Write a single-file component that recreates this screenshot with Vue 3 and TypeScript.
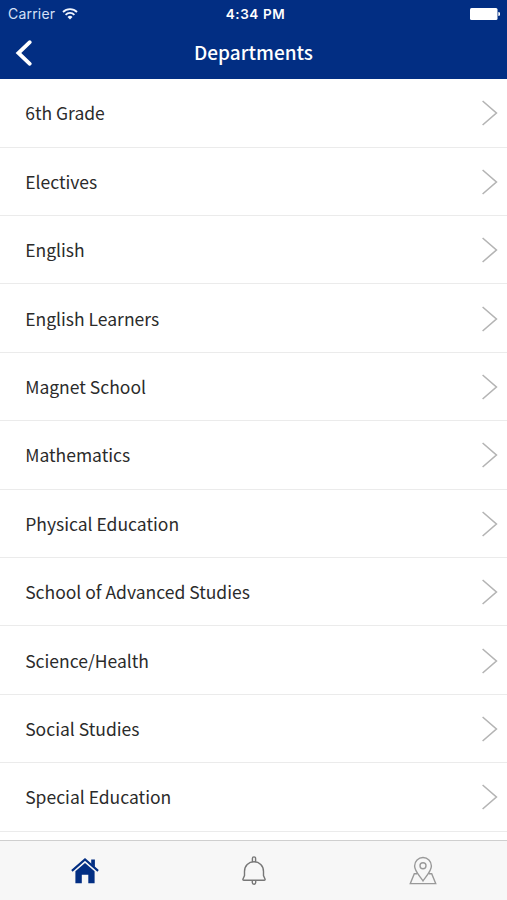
<script setup lang="ts">
const departments: string[] = [
  '6th Grade',
  'Electives',
  'English',
  'English Learners',
  'Magnet School',
  'Mathematics',
  'Physical Education',
  'School of Advanced Studies',
  'Science/Health',
  'Social Studies',
  'Special Education',
]
</script>

<template>
  <div class="screen">
    <header class="header">
      <div class="status">
        <div class="carrier">
          <span>Carrier</span>
          <svg class="wifi" width="16" height="12" viewBox="0 0 16 12">
            <path d="M1 4a9.8 9.8 0 0 1 14 0M3.6 6.8a6.2 6.2 0 0 1 8.8 0" />
            <path class="dot" d="M5.5 8.9a3.6 3.6 0 0 1 5 0L8 11.4z" />
          </svg>
        </div>
        <span class="time">4:34 PM</span>
        <div class="power">
          <svg width="30" height="12" viewBox="0 0 30 12">
            <rect x="0" y="0" width="27.5" height="12" rx="1.5" />
            <path d="M28.3 4a2 2 0 0 1 0 4z" />
          </svg>
        </div>
      </div>
      <div class="navbar">
        <button class="back" aria-label="Back">
          <svg width="18" height="28" viewBox="0 0 18 28">
            <path d="M14.8 3.2L3.4 14L14.8 24.8" />
          </svg>
        </button>
        <h1>Departments</h1>
        <span></span>
      </div>
    </header>

    <main class="list">
      <div v-for="name in departments" :key="name" class="row">
        <span class="label">{{ name }}</span>
        <svg class="chevron" width="17" height="26" viewBox="0 0 17 26">
          <path d="M1.6 1L15.4 13L1.6 25" />
        </svg>
      </div>
    </main>

    <nav class="tabs">
      <button class="tab home" aria-label="Home">
        <svg width="28" height="26" viewBox="0 0 28 26">
          <path d="M20.2 1.6h3.7v7.6l-3.7-3.4z" />
          <path d="M14 4.9L23.6 13.2V25.2H17.3V16.7H10.8V25.2H4.4V13.2z" />
          <path class="roof" d="M.9 12.9L14 1.5L27.1 12.9" />
        </svg>
      </button>
      <button class="tab bell" aria-label="Notifications">
        <svg width="26" height="32" viewBox="0 0 26 32">
          <path d="M3.5 20.5V16.5C3.5 10.6 7.6 6.8 13 6.8s9.5 3.8 9.5 9.7v4l1.5 3.4q.5 1.4-.9 1.4H2.9q-1.4 0-.9-1.4z" />
          <path d="M11.4 6.9V3.5a1.6 1.6 0 0 1 3.2 0v3.4M11.3 25.5v2a1.7 1.7 0 0 0 3.4 0v-2" />
        </svg>
      </button>
      <button class="tab place" aria-label="Map">
        <svg width="28" height="30" viewBox="0 0 28 30">
          <path d="M14 24.9C11.3 20.6 5.6 15.2 5.6 9.9a8.4 8.4 0 0 1 16.8 0C22.4 15.2 16.7 20.6 14 24.9z" />
          <circle cx="14" cy="9.8" r="3" />
          <path d="M8 17.8H5.3L1.3 27.6H26.7L22.7 17.8H20" />
        </svg>
      </button>
    </nav>
  </div>
</template>

<style>
body {
  margin: 0;
  overflow: hidden;
}
</style>

<style scoped>
.screen {
  display: flex;
  flex-direction: column;
  width: 100%;
  height: 900px;
  background: #fff;
  font-family: "Noto Sans CJK SC", "Noto Sans", sans-serif;
}

.header {
  flex: none;
  box-sizing: border-box;
  height: 79.3px;
  background: #022e83;
  color: #fff;
}

.status {
  display: grid;
  grid-template-columns: 1fr auto 1fr;
  align-items: center;
  height: 27px;
  padding: 0 6px 0 8px;
  font-family: Inter, "Liberation Sans", sans-serif;
  font-size: 14px;
}

.carrier {
  display: flex;
  align-items: center;
  gap: 7px;
  color: #d5e0f7;
  letter-spacing: 0.2px;
}

.wifi {
  fill: none;
  stroke: #f2f6ff;
  stroke-width: 1.8;
}

.wifi .dot {
  fill: #f2f6ff;
  stroke: none;
}

.time {
  padding-left: 2px;
  font-size: 13.5px;
  font-weight: 600;
  letter-spacing: 0.6px;
}

.power {
  display: flex;
  justify-content: flex-end;
  padding-right: 1px;
  fill: #fff;
}

.navbar {
  display: grid;
  grid-template-columns: 1fr auto 1fr;
  align-items: center;
  height: 51px;
}

.back,
.tab {
  margin: 0;
  padding: 0;
  border: 0;
  background: none;
}

.back {
  display: flex;
  padding-left: 15px;
}

.back path {
  fill: none;
  stroke: #fff;
  stroke-width: 3.8;
  stroke-linecap: round;
}

h1 {
  margin: 0 0 2px;
  font-size: 19px;
  font-weight: 500;
  line-height: 30px;
}

.list {
  flex: 1;
  min-height: 0;
  overflow: hidden;
}

.row {
  display: flex;
  align-items: center;
  justify-content: space-between;
  box-sizing: border-box;
  height: 68.4px;
  padding: 0 9px 0 25.2px;
  border-bottom: 1px solid #ebebeb;
}

.label {
  padding-top: 1px;
  color: #2b2b2b;
  font-size: 17.5px;
  line-height: 28px;
}

.chevron {
  margin-top: 1px;
  fill: none;
  stroke: #b4b4b4;
  stroke-width: 1.6;
}

.tabs {
  flex: none;
  display: grid;
  grid-template-columns: repeat(3, 1fr);
  box-sizing: border-box;
  height: 60px;
  border-top: 1px solid #cfcfcf;
  background: #f7f7f7;
}

.tab {
  display: flex;
  align-items: center;
  justify-content: center;
}

.tab svg {
  fill: none;
}

.home svg {
  fill: #022e83;
}

.home .roof {
  fill: none;
  stroke: #022e83;
  stroke-width: 2.1;
}

.bell svg {
  stroke: #777;
  stroke-width: 1.4;
}

.place svg {
  stroke: #999;
  stroke-width: 1.4;
}
</style>
